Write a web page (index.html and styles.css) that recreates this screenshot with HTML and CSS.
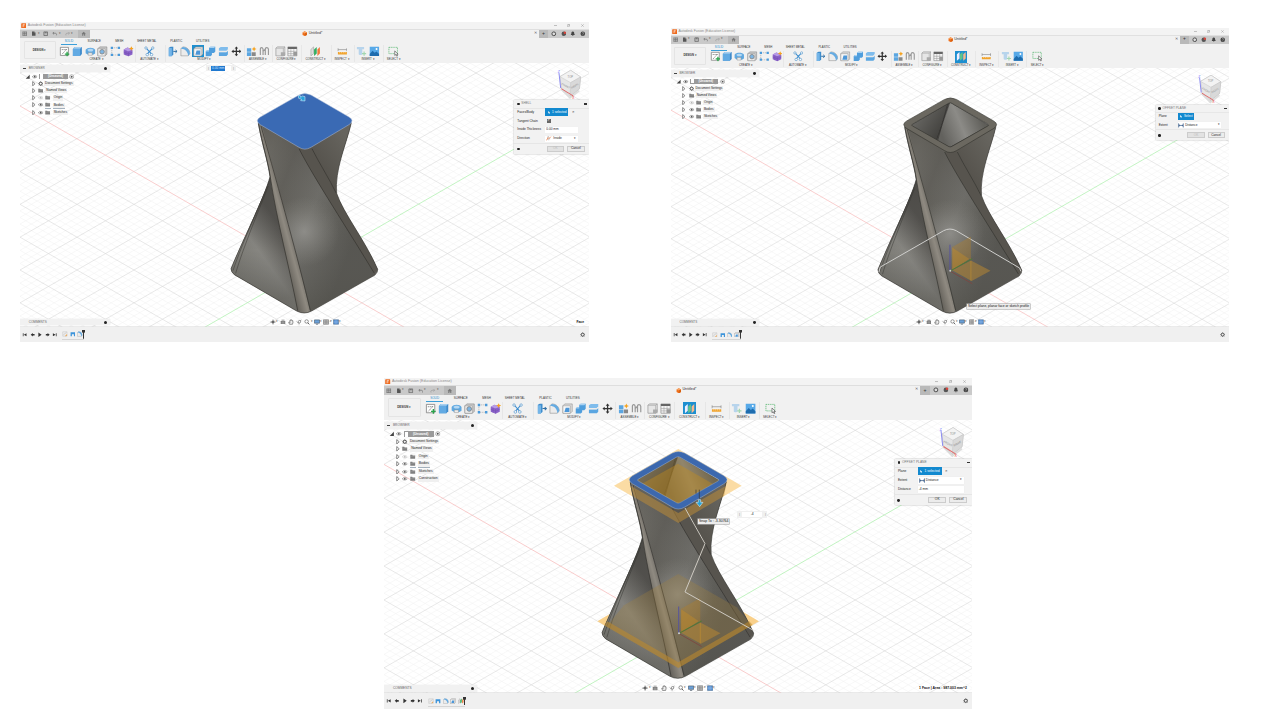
FILE: index.html
```html
<!DOCTYPE html>
<html lang="en">
<head>
<meta charset="utf-8">
<title>Autodesk Fusion – shell and offset plane</title>
<link rel="stylesheet" href="styles.css">
</head>
<body>
<svg class="defs" aria-hidden="true">
  <defs>
    <linearGradient id="gMain" x1="130" y1="300" x2="440" y2="420" gradientUnits="userSpaceOnUse"><stop offset="0" stop-color="#6f6d66"/><stop offset=".22" stop-color="#5f5d57"/><stop offset=".55" stop-color="#6d6c67"/><stop offset="1" stop-color="#53524d"/></linearGradient>
    <linearGradient id="gShade" x1="0" y1="150" x2="0" y2="690" gradientUnits="userSpaceOnUse"><stop offset="0" stop-color="#54524d" stop-opacity=".5"/><stop offset=".45" stop-color="#777" stop-opacity="0"/><stop offset="1" stop-color="#55544e" stop-opacity=".5"/></linearGradient>
    <radialGradient id="gGlow" cx="268" cy="455" r="105" gradientUnits="userSpaceOnUse"><stop offset="0" stop-color="#9b9a96" stop-opacity=".7"/><stop offset="1" stop-color="#8a8984" stop-opacity="0"/></radialGradient>
    <linearGradient id="gLeft" x1="70" y1="590" x2="225" y2="480" gradientUnits="userSpaceOnUse"><stop offset="0" stop-color="#74736d"/><stop offset=".5" stop-color="#868580"/><stop offset="1" stop-color="#4f4d49"/></linearGradient>
    <linearGradient id="gLeftShade" x1="130" y1="320" x2="170" y2="660" gradientUnits="userSpaceOnUse"><stop offset="0" stop-color="#4a4945" stop-opacity=".5"/><stop offset=".55" stop-color="#666" stop-opacity="0"/><stop offset="1" stop-color="#4c4b46" stop-opacity=".4"/></linearGradient>
    <linearGradient id="gStrip" x1="185" y1="480" x2="240" y2="465" gradientUnits="userSpaceOnUse"><stop offset="0" stop-color="#5c5953"/><stop offset=".6" stop-color="#8f8a81"/><stop offset="1" stop-color="#68655f"/></linearGradient>
    <linearGradient id="gBack" x1="300" y1="250" x2="400" y2="180" gradientUnits="userSpaceOnUse"><stop offset="0" stop-color="#55524c"/><stop offset="1" stop-color="#66645e"/></linearGradient>
    <linearGradient id="gInL" x1="150" y1="90" x2="240" y2="150" gradientUnits="userSpaceOnUse"><stop offset="0" stop-color="#6a6965"/><stop offset="1" stop-color="#3d3c39"/></linearGradient>
    <linearGradient id="gInR" x1="230" y1="150" x2="350" y2="100" gradientUnits="userSpaceOnUse"><stop offset="0" stop-color="#62615d"/><stop offset=".5" stop-color="#8c8b87"/><stop offset="1" stop-color="#5f5e59"/></linearGradient>

    <symbol id="i-sketch" viewBox="0 0 12 12"><path d="M1.500 1.500h9v9h-9z" fill="#fff" stroke="#777" stroke-width=".8"/><path d="M3 4h6M3.500 9l5-5.500" stroke="#555" stroke-width=".7" stroke-dasharray="1.400 .6"/><path d="M9 6.500v5M6.500 9h5" stroke="#2aa34a" stroke-width="1.500"/></symbol>
    <symbol id="i-extrude" viewBox="0 0 12 12"><path d="M1 3l2-2h8v8l-2 2H1z" fill="#3f8aca"/><path d="M1 3h8v8H1z" fill="#62aae3"/><path d="M1 3l2-2h8L9 3z" fill="#a6cff0"/></symbol>
    <symbol id="i-revolve" viewBox="0 0 12 12"><path d="M.7 4.200C2.500 1.200 9.500 1.200 11.300 4.200V8.400L9 9.800H3.500L.7 8z" fill="#5fa8e0"/><path d="M2.500 4.300C4 2.600 8 2.600 9.600 4.300L8 6H4.200z" fill="#b5d8f3"/><path d="M3.500 7.500h4.500v2.800H3.500z" fill="#eee" stroke="#888" stroke-width=".5"/></symbol>
    <symbol id="i-hole" viewBox="0 0 12 12"><path d="M1 3l2-2h8v8l-2 2H1z" fill="#ccc" stroke="#888" stroke-width=".7"/><path d="M1 3h8v8H1z" fill="#eee" stroke="#888" stroke-width=".5"/><circle cx="5.600" cy="6.400" r="2.500" fill="#7db5e3" stroke="#888" stroke-width="1"/></symbol>
    <symbol id="i-pattern" viewBox="0 0 12 12"><path d="M2 2h8M2 2v8h8" fill="none" stroke="#999" stroke-width=".6" stroke-dasharray="1.500 .8"/><path d="M.8.8h2.600v2.600H.8zM8.600.8h2.600v2.600H8.600zM.8 8.600h2.600v2.600H.8zM8.600 8.600h2.600v2.600H8.600z" fill="#4b9bdb"/></symbol>
    <symbol id="i-form" viewBox="0 0 12 12"><path d="M.8 4L5 1.800 10.500 4v5.500L6 11.500.8 9.500z" fill="#8b63c9"/><path d="M.8 4L5 1.800 10.500 4 6 6z" fill="#b79be6"/><path d="M6 6v5.500M3.300 5v5.500M.8 6.800L6 8.800l4.500-2" stroke="#6f49ae" stroke-width=".5" fill="none"/><path d="M9.300.3l.8 1.700 1.800.8-1.800.8-.8 1.800-.8-1.800L6.700 2.800l1.800-.8z" fill="#f6a21c"/></symbol>
    <symbol id="i-automate" viewBox="0 0 12 12"><path d="M2.200 2l3.800 4.200L9.800 2M6 6L3.600 9.300M6 6l2.400 3.300" fill="none" stroke="#3f8fd0" stroke-width="1.200"/><circle cx="2.200" cy="2.200" r="1.300" fill="#fff" stroke="#4a90c8" stroke-width=".7"/><circle cx="9.800" cy="2.200" r="1.300" fill="#fff" stroke="#4a90c8" stroke-width=".7"/><circle cx="3.600" cy="9.600" r="1.400" fill="#fff" stroke="#4a90c8" stroke-width=".7"/><circle cx="8.400" cy="9.600" r="1.400" fill="#fff" stroke="#4a90c8" stroke-width=".7"/></symbol>
    <symbol id="i-press" viewBox="0 0 12 12"><path d="M2 2l2-1.200h3v9L5 11.300H2z" fill="#3f8dcc"/><path d="M2 2.300h3.400v9H2z" fill="#74b5e8"/><path d="M7 6h4M9.400 4.400L11.200 6 9.400 7.600" fill="none" stroke="#2f6fa5" stroke-width="1.100"/></symbol>
    <symbol id="i-fillet" viewBox="0 0 12 12"><path d="M1 3l2-2c5 0 8 3.500 8 7.500L9 11H1z" fill="#ececec" stroke="#888" stroke-width=".6"/><path d="M1 3l2-2c5 0 8 3.500 8 7.500L9 11C9 7 6 3 1 3z" fill="#65abe2"/></symbol>
    <symbol id="i-shell" viewBox="0 0 12 12"><path d="M1 3l2-2h8v8l-2 2H1z" fill="#ddd" stroke="#888" stroke-width=".6"/><path d="M1 3h8v8H1z" fill="#f7f7f7" stroke="#888" stroke-width=".5"/><path d="M4 5h4v4.800H2.600z" fill="#4d97d8"/></symbol>
    <symbol id="i-combine" viewBox="0 0 12 12"><path d="M4.500 2.200L6 .8h5.500v5.400L10 7.700H7.700V10L6.200 11.300H.8V6L2.200 4.600h2.300z" fill="#4f9edd"/><path d="M6 .8h5.500L10 2.300H4.500zM.8 6l1.400-1.400h2.300V6z" fill="#a9d2f3"/></symbol>
    <symbol id="i-split" viewBox="0 0 12 12"><path d="M1 7h8.300L11 5.300V9.500L9.500 11H1z" fill="#5ba6e1"/><path d="M1 2.500L3 1h8v2.500L9.300 5.300H1z" fill="#7fbcec"/><path d="M.5 6.200h8.700l2.300-1.800" fill="none" stroke="#e8e8e8" stroke-width=".9"/></symbol>
    <symbol id="i-move" viewBox="0 0 12 12"><path d="M6 .5l2 2.400H6.700v2.400h2.400V4L11.500 6l-2.400 2V6.700H6.700v2.400H8L6 11.500 4 9.100h1.300V6.700H2.900V8L.5 6l2.400-2v1.300h2.400V2.900H4z" fill="#333"/></symbol>
    <symbol id="i-assemble" viewBox="0 0 12 12"><path d="M1 2.500h4.800v4H1zM1 7h4.800v4H1z" fill="#5ba6e1"/><path d="M6.300 7h4.500v4H6.300z" fill="#888"/><path d="M9 .6l.8 1.800 1.900.8-1.900.9L9 6l-.9-1.900-1.900-.9 1.900-.8z" fill="#f6a21c"/></symbol>
    <symbol id="i-joint" viewBox="0 0 12 12"><path d="M1.500 10V3.500C1.500 1.200 4 1.200 4.500 3.500V10M7 10V3.500C7 1.200 10 1.200 10.500 3.500V10M4.500 6L7 3.500" fill="none" stroke="#999" stroke-width="1.300"/></symbol>
    <symbol id="i-config" viewBox="0 0 12 12"><path d="M1 2.500L2.500 1H11v8.500L9.500 11H1z" fill="#e6e6e6" stroke="#9a9a9a" stroke-width=".8"/><path d="M1 2.500h8.300V11M9.300 2.500L11 1" fill="none" stroke="#9a9a9a" stroke-width=".6"/><path d="M6.500 7h4.800v4H6.500z" fill="#aaa"/></symbol>
    <symbol id="i-table" viewBox="0 0 12 12"><path d="M1 1h10v10H1z" fill="#f4f4f4" stroke="#888" stroke-width=".7"/><path d="M1 1h10v2.300H1z" fill="#666"/><path d="M1 6h10M1 8.500h10M4.300 3.600V11M7.600 3.600V11" stroke="#999" stroke-width=".6"/><path d="M7.200 6.800h4v4h-4z" fill="#999"/></symbol>
    <symbol id="i-plane" viewBox="0 0 12 12"><path d="M1 3.800L4 1v7.400L1 11z" fill="#ddd" stroke="#888" stroke-width=".5"/><path d="M4.500 3.800l3-2.800v7.400l-3 2.600z" fill="#35ae62"/><path d="M8.200 3.800L11 1v7.400L8.200 11z" fill="#f0793d"/></symbol>
    <symbol id="i-planeon" viewBox="0 0 12 12"><path d="M1 3.800L4 1v7.400L1 11z" fill="#eef"/><path d="M4.500 3.800l3-2.800v7.400l-3 2.600z" fill="#5fc389"/><path d="M8.200 3.800L11 1v7.400L8.200 11z" fill="#f5b98d"/></symbol>
    <symbol id="i-inspect" viewBox="0 0 12 12"><path d="M1.200 2.500v3.200M10.800 2.500v3.200M1.200 4h9.600" stroke="#777" stroke-width=".6"/><path d="M1 6.800h10V9.500H1z" fill="#f0a32c"/><path d="M3 6.800V8M5 6.800V8M7 6.800V8M9 6.800V8" stroke="#fff" stroke-width=".5"/></symbol>
    <symbol id="i-insert" viewBox="0 0 12 12"><path d="M1 1h8v2.600H7v5.200c0 1.500-4 1.500-4 0V3.600H1z" fill="#b7d4ec"/><path d="M9 6.200v4.600M6.700 8.500h4.600" stroke="#a2d6b0" stroke-width="1.300"/></symbol>
    <symbol id="i-image" viewBox="0 0 12 12"><path d="M.8.8h10.400v10.400H.8z" fill="#57a9e8"/><path d="M.8 9l3.200-3.600 2.300 2.200 2-1.600 2.900 2.800v2.400H.8z" fill="#1e6cae"/><circle cx="8.400" cy="3.300" r="1.100" fill="#fff"/></symbol>
    <symbol id="i-select" viewBox="0 0 12 12"><path d="M1 1.500h9.500v7H1z" fill="none" stroke="#53b56c" stroke-width=".8" stroke-dasharray="1.300 .7"/><path d="M7.500 5.500v5l1.300-1.100.9 2 .9-.4-.9-1.900h1.600z" fill="#fff" stroke="#333" stroke-width=".6"/></symbol>

    <symbol id="i-grid" viewBox="0 0 8 8"><path d="M1 1.500h6M1 4h6M1 6.500h6M1.300 1v6M4 1v6M6.700 1v6" stroke="#666" stroke-width=".9"/></symbol>
    <symbol id="i-file" viewBox="0 0 8 8"><path d="M1.500.8h3.500l1.700 1.700v4.700H1.500z" fill="#555"/><path d="M5 .8v1.700h1.700" stroke="#ccc" stroke-width=".4" fill="none"/></symbol>
    <symbol id="i-save" viewBox="0 0 8 8"><path d="M1.300 1.300h5.400v5.400H1.300z" fill="#bbb" stroke="#555" stroke-width=".9"/><path d="M2.700 1.300v2h2.600v-2" fill="#777"/></symbol>
    <symbol id="i-undo" viewBox="0 0 8 8"><path d="M3 1.500L1.200 3.300 3 5M1.400 3.300H5c2 0 2 2.700 1.500 3.200" fill="none" stroke="#666" stroke-width=".9"/></symbol>
    <symbol id="i-redo" viewBox="0 0 8 8"><path d="M5 1.500l1.800 1.800L5 5M6.600 3.300H3c-2 0-2 2.700-1.500 3.200" fill="none" stroke="#999" stroke-width=".9"/></symbol>
    <symbol id="i-home" viewBox="0 0 8 8"><path d="M4 1L.8 4h1v3h1.600V5h1.200v2h1.600V4h1z" fill="#777"/></symbol>
    <symbol id="i-cube" viewBox="0 0 8 8"><path d="M4 .5l3.200 1.600v3.800L4 7.500.8 5.900V2.100z" fill="#f0701c"/><path d="M4 .5l3.200 1.600L4 3.700.8 2.100z" fill="#f7a15f"/><path d="M4 3.700l3.200-1.600v3.800L4 7.500z" fill="#d9600f"/></symbol>
    <symbol id="i-logo" viewBox="0 0 8 8"><rect x=".3" y=".3" width="7.400" height="7.400" rx="1" fill="#ee6a1e"/><path d="M3 6.300V2h2.800M3 4.200h2.300" fill="none" stroke="#fff" stroke-width=".8"/></symbol>
    <symbol id="i-eye" viewBox="0 0 8 8"><path d="M.4 4C2 1.600 6 1.600 7.600 4 6 6.400 2 6.400.4 4z" fill="#fff" stroke="#666" stroke-width=".8"/><circle cx="4" cy="4" r="1.300" fill="#555"/></symbol>
    <symbol id="i-gear" viewBox="0 0 8 8"><circle cx="4" cy="4" r="2.200" fill="none" stroke="#555" stroke-width="1.400"/><path d="M4 .5v1.400M4 6.100v1.400M.5 4h1.400M6.100 4h1.400M1.500 1.500l1 1M5.500 5.500l1 1M6.500 1.500l-1 1M2.500 5.500l-1 1" stroke="#555" stroke-width="1"/></symbol>
    <symbol id="i-folder" viewBox="0 0 8 8"><path d="M.4 1.200h2.800l.6.800h3.800v4.800H.4z" fill="#808080"/><path d="M.4 3.300h7.200" stroke="#aaa" stroke-width=".5"/></symbol>
    <symbol id="i-arrow" viewBox="0 0 8 8"><path d="M2.500 .8l3.500 3.200-3.500 3.200z" fill="#fff" stroke="#444" stroke-width=".9"/></symbol>
    <symbol id="i-open" viewBox="0 0 8 8"><path d="M7 1v6H1z" fill="#444"/></symbol>
    <symbol id="i-target" viewBox="0 0 8 8"><circle cx="4" cy="4" r="3" fill="#fff" stroke="#666" stroke-width=".7"/><circle cx="4" cy="4" r="1.400" fill="#555"/></symbol>
    <symbol id="i-clock" viewBox="0 0 8 8"><circle cx="4" cy="4" r="2.700" fill="#ddd" stroke="#444" stroke-width="1.300"/></symbol>
    <symbol id="i-alert" viewBox="0 0 8 8"><circle cx="4" cy="4" r="3.200" fill="#555"/><circle cx="5.600" cy="2.500" r="1.800" fill="#d8453c"/></symbol>
    <symbol id="i-bell" viewBox="0 0 8 8"><path d="M4 .8c2 0 2 2 2.100 3.200L7 5.800H1L1.900 4C2 2.800 2 .8 4 .8zM3.200 6.200h1.600v.9H3.200z" fill="#444"/></symbol>
    <symbol id="i-user" viewBox="0 0 8 8"><circle cx="4" cy="4" r="3.300" fill="#444"/><path d="M3 3.100c.2-1.300 2.200-1.200 2.100.1C5 4 4 4 4 5M4 5.600v.6" stroke="#ddd" stroke-width=".7" fill="none"/></symbol>
    <symbol id="i-cursor" viewBox="0 0 8 8"><path d="M2.500 1v5l1.300-1 .8 1.900.9-.4-.8-1.800h1.600z" fill="#fff"/></symbol>
    <symbol id="i-dist" viewBox="0 0 10 8"><path d="M1 .5v7M9 .5v7M1.500 4h7M3 2.800L1.700 4 3 5.200M7 2.800L8.300 4 7 5.200" fill="none" stroke="#244a7c" stroke-width="1.100"/></symbol>
    <symbol id="i-dir" viewBox="0 0 10 8"><path d="M1 7l2.500-4.500L5 4l3-3" fill="none" stroke="#e2703a" stroke-width="1.300"/><path d="M3 3V.8h2M7 4.500H4.500V7" stroke="#888" stroke-width=".7" fill="none"/></symbol>
    <symbol id="i-orbit" viewBox="0 0 8 8"><path d="M4 .8v6.400M.6 4h6.800" stroke="#555" stroke-width="1"/><circle cx="4" cy="4" r="1.800" fill="#666"/></symbol>
    <symbol id="i-look" viewBox="0 0 8 8"><path d="M1 2.500h6v4.300H1zM2 1h4v1H2z" fill="#777"/><path d="M2 4h4M2 5.500h4" stroke="#ddd" stroke-width=".5"/></symbol>
    <symbol id="i-pan" viewBox="0 0 8 8"><path d="M2 7L.9 4.300l1-.3.6.8V1.800h1V1h1v.6h1v.7h1V5L6 7z" fill="#eee" stroke="#555" stroke-width=".8"/></symbol>
    <symbol id="i-zoom" viewBox="0 0 8 8"><circle cx="3.500" cy="3.300" r="2.300" fill="#fff" stroke="#666" stroke-width=".9"/><path d="M5 5l2.200 2.200" stroke="#555" stroke-width="1.200"/></symbol>
    <symbol id="i-zoomfit" viewBox="0 0 8 8"><path d="M1 3.300l2 2.200L7 1" fill="none" stroke="#777" stroke-width=".9"/><circle cx="4.600" cy="3.600" r="1.600" fill="#fff" stroke="#555" stroke-width=".8"/><path d="M4 5.500v1.700" stroke="#555" stroke-width=".9"/></symbol>
    <symbol id="i-display" viewBox="0 0 8 8"><path d="M.6 1.200h6.800v4.400H.6z" fill="#6aa0d8" stroke="#456" stroke-width=".8"/><path d="M2.500 7h3" stroke="#456" stroke-width=".9"/></symbol>
    <symbol id="i-grids" viewBox="0 0 8 8"><path d="M.6 1h6.800v6H.6z" fill="#ccc" stroke="#666" stroke-width=".7"/><path d="M.6 3h6.800M.6 5h6.800M3 1v6M5 1v6" stroke="#777" stroke-width=".6"/></symbol>
    <symbol id="i-views" viewBox="0 0 8 8"><path d="M.6 1h6.800v6H.6z" fill="#5d95d8" stroke="#357" stroke-width=".6"/><path d="M.6 4h6.800M4 1v6" stroke="#a9c8ec" stroke-width=".5"/></symbol>
    <symbol id="i-first" viewBox="0 0 8 8"><path d="M1.200 1.700h1.100v4.600H1.200zM6.700 1.700v4.600L2.700 4z" fill="#333"/></symbol>
    <symbol id="i-prev" viewBox="0 0 8 8"><path d="M4.200 1.300v1.500h2.600v2.400H4.200v1.500L1 4z" fill="#333"/></symbol>
    <symbol id="i-play" viewBox="0 0 8 8"><path d="M2 .6L6.800 4 2 7.400z" fill="#333"/></symbol>
    <symbol id="i-next" viewBox="0 0 8 8"><path d="M3.800 1.300v1.500H1.200v2.400h2.600v1.500L7 4z" fill="#333"/></symbol>
    <symbol id="i-last" viewBox="0 0 8 8"><path d="M5.700 1.700h1.100v4.600H5.700zM1.300 1.700v4.600L5.300 4z" fill="#333"/></symbol>
    <symbol id="i-t-sketch" viewBox="0 0 8 8"><path d="M1 1h6v6H1z" fill="#eee" stroke="#bbb" stroke-width=".6"/><path d="M2 5l4-3" stroke="#aaa" stroke-width=".6"/><path d="M4.500 6.500l2-2 .8.800-2 2z" fill="#f0a040"/></symbol>
    <symbol id="i-t-loft" viewBox="0 0 8 8"><path d="M.8 1.500h6.400V7H5.400V4.200H2.600V7H.8z" fill="#3d94da"/></symbol>

    <g id="tower">
      <path d="M130 128 C140 190 158 240 165 290 C150 350 75 500 48 566 Q48 576 58 584 L245 693 Q268 705 290 693 L480 585 Q489 576 488 568 C450 480 385 400 365 340 C358 270 395 190 409 128 Z" fill="#605e58"/>
      <path d="M166 292 C150 345 72 500 48 568 Q50 577 58 584 L248 694 C225 570 185 420 166 292Z" fill="url(#gLeft)"/>
      <path d="M166 292 C150 345 72 500 48 568 Q50 577 58 584 L248 694 C225 570 185 420 166 292Z" fill="url(#gLeftShade)"/>
      <path d="M136 138 C160 250 240 520 285 694 L478 584 C430 490 300 300 252 206Z" fill="url(#gMain)"/>
      <path d="M136 138 C160 250 240 520 285 694 L478 584 C430 490 300 300 252 206Z" fill="url(#gShade)"/>
      <path d="M136 138 C160 250 240 520 285 694 L478 584 C430 490 300 300 252 206Z" fill="url(#gGlow)"/>
      <path d="M252 206 C300 300 400 450 478 580 L488 568 C450 480 385 400 362 335 C345 300 310 245 290 200Z" fill="#57544e"/>
      <path d="M290 200 L408 132 C395 190 358 270 364 338 C345 300 310 245 290 200Z" fill="url(#gBack)"/>
      <path d="M130 130 C145 200 165 270 170 320 C190 430 225 570 248 694 Q268 702 285 694 C250 540 195 340 142 142Z" fill="url(#gStrip)"/>
      <g fill="none" stroke="#33322e" stroke-width="2">
        <path d="M130 130 C142 195 160 245 166 292 C185 420 225 570 248 692"/>
        <path d="M138 138 C195 340 250 540 286 691"/>
        <path d="M252 206 C300 300 400 450 478 580"/>
        <path d="M291 206 C310 245 345 300 364 340"/>
        <path d="M166 292 C150 345 80 490 54 572M160 318 C140 370 85 500 62 580" stroke-width="1.400"/>
      </g>
      <path d="M130 128 C140 190 158 240 165 290 C150 350 75 500 48 566 Q48 576 58 584 L245 693 Q268 705 290 693 L480 585 Q489 576 488 568 C450 480 385 400 365 340 C358 270 395 190 409 128" fill="none" stroke="#3f3e3a" stroke-width="2"/>
    </g>
    <path id="rim" d="M252 45 Q269 36 288 45 L402 111 Q420 122 402 134 L288 202 Q269 213 252 202 L136 134 Q118 122 136 111Z"/>
    <g id="planes">
      <path d="M262 487l56-32v65l-56 35z" fill="#b07f2c" fill-opacity=".4"/>
      <path d="M262 488l56 38v-6l-56 37z" fill="#c98f26" fill-opacity=".4"/>
      <path d="M262 557l56-30 59 31-57 31z" fill="#bd8a30" fill-opacity=".5"/>
      <path d="M318 528v60" stroke="#c9932f" stroke-width="1.500"/>
      <path d="M255 480v78" stroke="#57549c" stroke-width="3"/>
      <path d="M257 558l65-36" stroke="#4e7a35" stroke-width="3"/>
      <path d="M257 560l65 37" stroke="#7d4640" stroke-width="2.500"/>
      <circle cx="256" cy="558" r="3" fill="#ccc"/>
    </g>
  </defs>
</svg>
<main class="board">
  <div class="row row-top"><section class="shot shot-a" id="a"></section><section class="shot shot-b" id="b"></section></div>
  <div class="row row-bottom"><section class="shot shot-c" id="c"></section></div>
</main>
<script src="app.js"></script>
</body>
</html>
```
FILE: styles.css
```css
* { box-sizing: border-box; }
body { margin: 0; background: #fff; font-family: "Liberation Sans", Arial, sans-serif; }
.defs { position: absolute; width: 0; height: 0; }
.board { width: 1280px; height: 720px; overflow: hidden; }
.row { display: flex; align-items: flex-start; }
.row-top { height: 378px; padding: 22px 0 0 20px; gap: 82px; }
.row-bottom { padding-left: 384px; }
.shot-b { padding-top: 6px; }
.shot-b .win { zoom: .9807; }
.shot-c .win { zoom: 1.0334; }

.win { width: 569px; height: 320px; display: flex; flex-direction: column; background: #f1f1f1; color: #333; font-size: 3.200px; line-height: 1; overflow: hidden; }
.win svg { display: block; flex: none; }
.s { width: 5.400px; height: 5.400px; }
.titlebar { height: 7.700px; display: flex; align-items: center; padding: 0 5.500px 1px 1px; gap: 1.300px; background: #f3f3f3; color: #888; font-size: 3.500px; }
.titlebar .ctl { display: flex; gap: 10.500px; margin-left: auto; }
.titlebar .ctl svg { width: 3px; height: 3px; }

.tabbar { height: 8.500px; display: flex; background: #f1f1f1; align-items: stretch; box-shadow: 0 -.5px 0 #ccc; }
.quick { width: 58px; display: flex; align-items: center; background: #c9c9c9; padding-left: 2.300px; }
.quick .s { margin-right: 3.600px; }
.quick .dd { margin: 0 3.800px 0 -2.600px; font-size: 2.600px; color: #555; }
.hometab { width: 11.500px; background: #b9b9b9; display: flex; align-items: center; justify-content: center; }
.doctab { flex: 1; display: flex; align-items: center; justify-content: center; gap: 1.200px; position: relative; font-size: 3.600px; padding-right: 4px; }
.doctab .x { position: absolute; right: 2.500px; color: #666; }
.tools { display: flex; background: #cacaca; width: 50px; align-items: center; }
.tools .plus { width: 9px; align-self: stretch; background: #b9b9b9; display: flex; align-items: center; justify-content: center; font-size: 5px; }
.tools .s { margin-left: 3.100px; width: 5.600px; height: 5.600px; }
.tools .s + .s { margin-left: 4.100px; }

.ribbon { height: 24.800px; display: flex; background: #f1f1f1; }
.design { width: 32px; height: 18px; margin: 3.300px 5.500px 0 3.500px; border: 1px solid #e4e4e4; border-radius: 1px; display: flex; align-items: center; justify-content: center; font-size: 2.800px; font-weight: bold; }
.tabs { display: flex; height: 7px; font-size: 2.850px; text-align: center; align-items: flex-start; color: #333; }
.tabs span { line-height: 6.400px; height: 7px; white-space: nowrap; }
.tabs .on { color: #1b8ccb; border-bottom: 1px solid #3b9fd9; }
.t0 { width: 16px; } .t1 { width: 34.600px; } .t2 { width: 15.400px; } .t3 { width: 39.400px; } .t4 { width: 19.800px; } .t5 { width: 33px; }
.groups { display: flex; height: 16.500px; margin-left: -2.500px; }
.group { box-shadow: .5px 0 0 #dcdcdc; display: flex; flex-direction: column; align-items: center; height: 16.500px; }
.group:last-child { box-shadow: none; }
.group .icons { display: flex; gap: .7px; height: 12px; align-items: center; }
.ic { width: 12px; height: 12px; padding: .6px; }
.ic svg { width: 10.800px; height: 10.800px; }
.ic.on { background: #1d8fd0; }
.group b { font-weight: normal; font-size: 2.850px; margin-top: 1.300px; white-space: nowrap; }

.canvas { height: 264px; position: relative; background: #fff; overflow: hidden; }
.scene { position: absolute; inset: 0; width: 569px; height: 264px; }
.bar { width: 90px; height: 6.800px; background: #f1f1f1; box-shadow: 0 0 .8px #ccc; display: flex; align-items: center; padding: 0 3px 0 8.700px; font-size: 3.100px; color: #666; justify-content: space-between; }
.bar::after { content: ""; width: 3px; height: 3px; border-radius: 50%; background: #222; }
.browser { position: absolute; left: 0; top: 2px; }
.browser .bar { position: relative; }
.browser .bar::before { content: ""; position: absolute; left: 3px; top: 2.700px; width: 3px; height: 1.200px; background: #444; }
.comments { position: absolute; left: 0; top: 255.700px; }
.tree { display: flex; flex-direction: column; padding-top: 1px; }
.node { height: 7.200px; display: flex; align-items: center; gap: 2px; padding-left: 10.500px; font-size: 3.250px; color: #222; white-space: nowrap; }
.node .tx { background: #f0f0f0; padding: 1px; margin-left: -1.200px; }
.node .fo + .tx { margin-left: 0; }
.node .dim { opacity: .4; }
.node.sel .tx, .node.sel .fo { box-shadow: 0 .6px 0 #6d8296; }
.node.root { padding-left: 5.200px; gap: 1.500px; }
.rootbox { background: #9a9a9a; height: 5.500px; width: 29px; color: #fff; font-weight: bold; display: flex; align-items: center; gap: 4.500px; padding-left: 1px; font-size: 3.100px; }
.rootbox i { width: 3.500px; height: 4.500px; background: #fff; }

.val { position: absolute; display: flex; align-items: center; justify-content: space-between; height: 6.200px; background: #f0f0f0; padding: 0 .8px; width: 29.500px; color: #888; }
.val .f { background: #fff; width: 20px; height: 5.400px; display: flex; align-items: center; justify-content: center; color: #222; }
.val mark { background: #1f78cf; color: #cfe5ff; padding: .7px; margin-right: 5px; }
.tip { position: absolute; background: #ececec; box-shadow: 0 0 0 .6px #aaa; color: #111; padding: .8px .8px; white-space: nowrap; font-size: 3.400px; }
.panel { position: absolute; left: 494.300px; top: 37.200px; width: 74.300px; background: #f2f2f2; box-shadow: 0 0 1.500px #aaa; font-size: 3.200px; color: #222; }
.panel header { height: 7.600px; display: flex; align-items: center; gap: 1.500px; padding: 0 1.500px 0 2.700px; box-shadow: 0 .4px 0 #d5d5d5; color: #777; }
.panel header::before, .panel footer::before { content: ""; width: 2.800px; height: 2.800px; border-radius: 50%; background: #222; }
.panel header::after { content: ""; margin-left: auto; width: 3px; height: 1.200px; background: #333; }
.fields { padding-bottom: .8px; }
.field { display: flex; height: 8.900px; align-items: center; padding-left: 3px; }
.field label { width: 28.200px; white-space: nowrap; }
.box { width: 32.500px; height: 6.600px; background: #fff; box-shadow: 0 0 .5px #bbb; display: flex; align-items: center; gap: 1px; padding: 0 1.500px 0 .8px; }
.box svg { width: 6px; height: 5px; }
.box .dd { margin-left: auto; font-size: 2.600px; }
.pick { background: #1289cf; color: #fff; height: 8px; width: 23px; display: flex; align-items: center; gap: 1px; padding-left: 1.500px; margin-right: 3.500px; }
.pick.short { width: 16.500px; }
.pick svg { width: 4px; height: 5px; }
.check { width: 3.600px; height: 3.600px; background: #666; color: #fff; margin-left: 1.500px; font-size: 3.600px; line-height: 3.600px; }
.panel.op .field label { width: 19.300px; }
.panel.op .box { width: 44.500px; }
.panel footer { height: 9.900px; box-shadow: 0 -.4px 0 #d5d5d5; display: flex; align-items: center; gap: 3px; padding: 0 4px 0 2.500px; }
.btn { width: 17.500px; height: 6px; border: 1px solid #ccc; display: flex; align-items: center; justify-content: center; background: #ececec; }
.btn.ok { margin-left: auto; }
.btn.off { color: #bbb; background: #e2e2e2; }
.nav { position: absolute; left: 250px; top: 256.100px; display: flex; align-items: center; color: #444; }
.nav .s { margin-right: 2.300px; width: 6px; height: 6px; }
.nav .dd { font-size: 2.600px; margin: 0 1.300px 0 -2.100px; }
.status { position: absolute; right: 5px; top: 257.800px; color: #111; font-size: 3.350px; font-weight: bold; }

.timeline { flex: 1; display: flex; align-items: center; background: #f0f0f0; padding: 0 3.500px 0 2.400px; box-shadow: 0 -.4px 0 #ccc; position: relative; }
.timeline .s { margin-right: 2.050px; }
.feats { display: flex; margin-left: 2.700px; box-shadow: 0 .5px 0 #bbb; padding-bottom: 1.500px; margin-top: 1.500px; }
.feats .s { width: 5.800px; height: 6px; margin-right: 1.500px; }
.marker { width: 3.400px; height: 8.500px; margin-left: -2.400px; background: linear-gradient(#333, #333) center / 1px 100% no-repeat, linear-gradient(#333, #333) top / 100% 2.600px no-repeat; }
.timeline .end { margin: 0 0 0 auto; }
```
FILE: app.js
```js
const use = (id, cls = "s") => `<svg class="${cls}"><use href="#i-${id}"/></svg>`;
const dd = '<span class="dd">▾</span>';

const groups = [
  ["CREATE", 76, ["sketch", "extrude", "revolve", "hole", "pattern", "form"]],
  ["AUTOMATE", 30, ["automate"]],
  ["MODIFY", 79.5, ["press", "fillet", "shell", "combine", "split", "move"]],
  ["ASSEMBLE", 28, ["assemble", "joint"]],
  ["CONFIGURE", 29, ["config", "table"]],
  ["CONSTRUCT", 29.5, ["plane"]],
  ["INSPECT", 23, ["inspect"]],
  ["INSERT", 29, ["insert", "image"]],
  ["SELECT", 22.5, ["select"]],
];

function ribbon(active) {
  const tabs = ["SOLID", "SURFACE", "MESH", "SHEET METAL", "PLASTIC", "UTILITIES"]
    .map((t, i) => `<span class="t${i}${i ? "" : " on"}">${t}</span>`).join("");
  const gs = groups.map(([name, w, icons]) => `<div class="group" style="width:${w}px"><div class="icons">${
    icons.map(i => `<span class="ic${i === active ? " on" : ""}">${use(i === "plane" && active === i ? "planeon" : i, "")}</span>`).join("")
  }</div><b>${name} ▾</b></div>`).join("");
  return `<div class="ribbon"><div class="design">DESIGN ▾</div><div><div class="tabs">${tabs}</div><div class="groups">${gs}</div></div></div>`;
}

function tree(w) {
  const rows = ["Origin", "Bodies", "Sketches"].concat(w.construction ? ["Construction"] : []);
  return `<div class="browser"><div class="bar">BROWSER</div><div class="tree">
    <div class="node root">${use("open")}${use("eye")}<span class="rootbox"><i></i>(Unsaved)</span>${use("target")}</div>
    <div class="node">${use("arrow")}${use("gear")}<span class="tx">Document Settings</span></div>
    <div class="node">${use("arrow")}${use("folder", "s fo")}<span class="tx">Named Views</span></div>
    ${rows.map(r => `<div class="node${r === "Bodies" && w.bodies ? " sel" : ""}">${use("arrow")}${use("eye", r === "Origin" ? "s dim" : "s")}${use("folder", "s fo")}<span class="tx">${r}</span></div>`).join("")}
  </div></div>`;
}

function grid() {
  const k = .576, ox = 305, oy = 270, step = 11.4;
  let minor = "", major = "";
  for (let i = -70; i <= 70; i++) {
    if (!i) continue;
    const x = ox + i * step;
    const d = `M${x - 500} ${oy - 500 * k}L${x + 500} ${oy + 500 * k}M${x - 500} ${oy + 500 * k}L${x + 500} ${oy - 500 * k}`;
    if (i % 5) minor += d; else major += d;
  }
  return `<path d="${minor}" stroke="#f1f1f1" stroke-width=".5"/><path d="${major}" stroke="#d9d9d9" stroke-width=".6"/>
    <path d="M20 106L409 330" stroke="#f7b9b9" stroke-width=".7"/><path d="M589 106L200 330" stroke="#a9efa9" stroke-width=".7"/>`;
}

const cube = `<g transform="translate(300 18) scale(.33333)">
  <path d="M784 214L810 240 838 218" fill="none" stroke="#ddd" stroke-width="5"/>
  <path d="M812 157L842 177 838 213 810 235 784 210 780 176Z" fill="#e6e6e6" stroke="#c4c4c4" stroke-width="2"/>
  <path d="M812 157L842 177 812 194 780 176Z" fill="#f3f3f3" stroke="#c4c4c4" stroke-width="1.500"/>
  <path d="M812 194L842 177 838 213 810 235Z" fill="#d9d9d9" stroke="#c4c4c4" stroke-width="1.500"/>
  <path d="M777 165L782 210" stroke="#8c8cf0" stroke-width="3"/><path d="M784 212L820 234" stroke="#e06a6a" stroke-width="3"/>
  <g font-size="8" fill="#888" text-anchor="middle"><text x="811" y="179">TOP</text><text x="796" y="206" transform="rotate(28 796 206)">FRONT</text><text x="826" y="206" transform="rotate(-30 826 206)">RIGHT</text></g>
  <text x="773" y="166" font-size="11" fill="#77f">Z</text><text x="816" y="242" font-size="11" fill="#e44">X</text></g>`;

const hollow = `<g stroke="#2f2e2b" stroke-width="1.800">
  <path d="M255 52L137 122 215 167Z" fill="url(#gInL)"/>
  <path d="M255 52L373 122 255 188 215 167Z" fill="url(#gInR)"/>
  <path d="M248 58L218 168" fill="none"/></g>`;

const ring = "M252 45Q269 36 288 45L402 111Q420 122 402 134L288 202Q269 213 252 202L136 134Q118 122 136 111ZM264 57L153 121Q149 124 153 126L264 189Q269 192 274 189L385 126Q389 124 385 121L274 57Q269 54 264 57Z";

const scenes = {
  a: `<use href="#tower"/><use href="#rim" fill="#3a6ab4" stroke="#aebdd6" stroke-width="1.500"/>
    <path d="M250 46l6 1 1 5 5-4 8 2v13l-13-1 3-4-9-3z" fill="#29a3dc" stroke="#e8f6ff" stroke-width="1.500"/>`,
  b: `<use href="#tower"/><g transform="translate(8.300 .3) scale(1.0194)">${hollow}</g>
    <path d="${ring}" fill="#6b6860" fill-rule="evenodd" stroke="#32312d" stroke-width="1.800"/>
    <g transform="translate(8.300 .3) scale(1.0194)"><path d="M42 562L46 547 236 438Q255 428 274 438L464 550 468 560" fill="none" stroke="#cfcfcd" stroke-width="3"/><use href="#planes"/></g>`,
  c: `<path transform="translate(13 6) scale(.9677)" d="M265 28L455 138 265 250 72 138Z" fill="#fbdca4"/>
    <path transform="translate(13 6) scale(.9677)" d="M22 545L265 403 507 545 265 685Z" fill="#f9d08a"/>
    <use href="#tower"/><g transform="translate(8.300 .3) scale(1.0194)">${hollow}<path d="M255 52L373 122 255 188 137 122Z" fill="#9a7a3a" fill-opacity=".35"/><path d="M255 74L355 132 255 188 153 131Z" fill="#c48c1c" fill-opacity=".42"/></g>
    <g transform="translate(13 6) scale(.9677)">
      <path d="M122 138L265 220 408 138 402 169 265 250 132 172Z" fill="#b98a38" fill-opacity=".55"/>
      <path d="M102 497L265 403 440 503 484 557 265 685 50 560Z" fill="#a3803a" fill-opacity=".3"/>
      <path d="M42 557L265 685 488 556 478 545 265 668 52 545Z" fill="#c08a2c" fill-opacity=".55"/>
      <use href="#planes" transform="translate(4 7) scale(1.028)"/>
      <path d="M285 205L345 312 285 457 490 572" fill="none" stroke="#cfcbc3" stroke-width="3"/></g>
    <path d="${ring}" fill="#3c68ae" fill-rule="evenodd" stroke="#b9c3d3" stroke-width="1.200"/>
    <g transform="translate(13 6) scale(.9677)"><path d="M318 150v12M328 150v28" stroke="#333" stroke-width="2"/><path d="M325 180h7v8h7l-10 13-11-13h7z" fill="#25a2d8" stroke="#fff" stroke-width="1.500"/></g>`,
};

const footer = off => `<footer><span class="btn ok${off ? " off" : ""}">OK</span><span class="btn">Cancel</span></footer>`;
const distance = `<div class="field"><label>Extent</label><span class="box">${use("dist")}Distance${dd}</span></div>`;

const panels = {
  a: `<div class="panel"><header>SHELL</header><div class="fields">
    <div class="field"><label>Faces/Body</label><span class="pick">${use("cursor")}1 selected</span>✕</div>
    <div class="field"><label>Tangent Chain</label><span class="check">✓</span></div>
    <div class="field"><label>Inside Thickness</label><span class="box">0.00 mm</span></div>
    <div class="field"><label>Direction</label><span class="box">${use("dir")}Inside${dd}</span></div></div>${footer(true)}</div>`,
  b: `<div class="panel op"><header>OFFSET PLANE</header><div class="fields">
    <div class="field"><label>Plane</label><span class="pick short">${use("cursor")}Select</span></div>${distance}</div>${footer(true)}</div>`,
  c: `<div class="panel op"><header>OFFSET PLANE</header><div class="fields">
    <div class="field"><label>Plane</label><span class="pick">${use("cursor")}1 selected</span>✕</div>${distance}
    <div class="field"><label>Distance</label><span class="box">-4 mm</span></div></div>${footer(false)}</div>`,
};

const overlays = {
  a: `<div class="val" style="left:186px;top:2.200px"><span>⋮</span><span class="f"><mark>0.00 mm</mark></span><span>⋮</span></div>`,
  b: `<div class="tip" style="left:302px;top:240.300px">Select plane, planar face or sketch profile</div>`,
  c: `<div class="val" style="left:341.500px;top:88px"><span>⋮</span><span class="f">-4</span><span>⋮</span></div>
    <div class="tip" style="left:304px;top:95.500px">Snap To : -3.30764</div>`,
};

const wins = {
  a: { active: "shell", bodies: true, status: "Face", feats: ["t-sketch", "t-loft", "fillet"] },
  b: { active: "plane", status: "", feats: ["t-sketch", "t-loft", "fillet", "shell"] },
  c: { active: "plane", bodies: true, construction: true, status: "1 Face | Area : 987.003 mm^2", feats: ["t-sketch", "t-loft", "fillet", "shell", "plane"] },
};

for (const [id, w] of Object.entries(wins)) {
  document.getElementById(id).innerHTML = `<div class="win">
    <div class="titlebar">${use("logo")}Autodesk Fusion (Education License)<span class="ctl">
      <svg viewBox="0 0 6 6"><path d="M0 3h6" stroke="#888"/></svg><svg viewBox="0 0 6 6"><path d="M.5 1.500h4v4h-4zM2 .5h3.500V4" fill="none" stroke="#888" stroke-width=".8"/></svg><svg viewBox="0 0 6 6"><path d="M.5.5l5 5M5.500.5l-5 5" stroke="#888" stroke-width=".8"/></svg></span></div>
    <div class="tabbar"><div class="quick">${use("grid")}${use("file")}${dd}${use("save")}${use("undo")}${dd}${use("redo")}${dd}</div>
      <div class="hometab">${use("home")}</div><div class="doctab">${use("cube")}Untitled*<span class="x">✕</span></div>
      <div class="tools"><span class="plus">+</span>${["clock", "alert", "bell", "user"].map(i => use(i)).join("")}</div></div>
    ${ribbon(w.active)}
    <div class="canvas"><svg class="scene" viewBox="20 63 569 264">${grid()}<g transform="translate(215 80) scale(.33333)">${scenes[id]}</g>${cube}</svg>
      ${tree(w)}${overlays[id]}${panels[id]}
      <div class="bar comments">COMMENTS</div>
      <div class="nav">${use("orbit")}${dd}${use("look")}${use("pan")}${use("zoomfit")}${use("zoom")}${dd}${use("display")}${dd}${use("grids")}${dd}${use("views")}${dd}</div>
      <div class="status">${w.status}</div></div>
    <div class="timeline">${["first", "prev", "play", "next", "last"].map(i => use(i)).join("")}
      <div class="feats">${w.feats.map(i => use(i)).join("")}</div><span class="marker"></span>${use("gear", "s end")}</div></div>`;
}
```
